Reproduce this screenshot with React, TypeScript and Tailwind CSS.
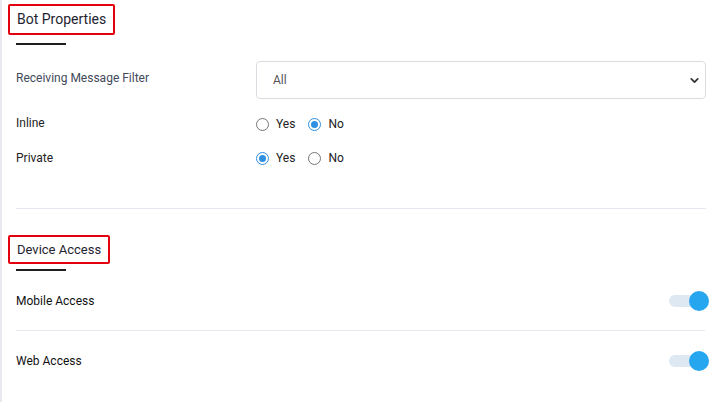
import { ChevronDown } from "lucide-react";

function Radio({ checked, label }: { checked: boolean; label: string }) {
  return (
    <label className="flex items-center gap-[7px]">
      {checked ? (
        <span className="w-[13px] h-[13px] rounded-full border border-[#2f8fe0] flex items-center justify-center">
          <span className="w-[7px] h-[7px] rounded-full bg-[#2f8fe0]" />
        </span>
      ) : (
        <span className="w-[13px] h-[13px] rounded-full border border-[#767676]" />
      )}
      <span className="text-[12px] text-[#222]">{label}</span>
    </label>
  );
}

function Toggle() {
  return (
    <div className="relative w-[40px] h-[20px] flex items-center">
      <div className="w-[30px] h-[12px] rounded-full bg-[#dde8f3]" />
      <div className="absolute right-0 top-0 w-[20px] h-[20px] rounded-full bg-[#27a6f0]" />
    </div>
  );
}

export default function App() {
  return (
    <div
      className="min-h-[402px] bg-white border-l-2 border-[#e8e8ee] pl-[6px] pr-[9px] pt-[4px]"
      style={{ fontFamily: "Roboto, 'Liberation Sans', sans-serif" }}
    >
      {/* Bot properties */}
      <div className="inline-block border-2 border-[#e3000f] rounded-[2px] px-[7px] h-[31px] leading-[27px] text-[14px] text-[#1f2430]">
        Bot Properties
      </div>
      <div className="ml-[8px] mt-[8px] w-[50px] h-[2px] bg-[#1f1f1f]" />

      <div className="ml-[8px] mr-[3px] mt-[16px] flex items-center h-[38px]">
        <div className="w-[240px] text-[12px] text-[#3f4a5a] -mt-[4px]">Receiving Message Filter</div>
        <div className="flex-1 h-[38px] border border-[#d9dce0] rounded-[4px] flex items-center justify-between pl-[16px] pr-[4px]">
          <span className="text-[12px] text-[#555]">All</span>
          <ChevronDown size={13} strokeWidth={3.2} className="text-[#333]" />
        </div>
      </div>

      <div className="ml-[8px] mt-[15px] flex items-center h-[20px]">
        <div className="w-[240px] text-[12px] text-[#222] -mt-[2px]">Inline</div>
        <div className="flex items-center gap-[13px]">
          <Radio checked={false} label="Yes" />
          <Radio checked label="No" />
        </div>
      </div>

      <div className="ml-[8px] mt-[14px] flex items-center h-[20px]">
        <div className="w-[240px] text-[12px] text-[#222]">Private</div>
        <div className="flex items-center gap-[13px]">
          <Radio checked label="Yes" />
          <Radio checked={false} label="No" />
        </div>
      </div>

      <div className="ml-[8px] mr-[3px] mt-[40px] h-px bg-[#e6e8f0]" />

      {/* Device access */}
      <div className="mt-[26px] inline-block border-2 border-[#e3000f] rounded-[2px] px-[7px] h-[29px] leading-[25px] text-[13px] text-[#1f2430]">
        Device Access
      </div>
      <div className="ml-[8px] mt-[5px] w-[50px] h-[2px] bg-[#1f1f1f]" />

      <div className="ml-[8px] mt-[19px] flex items-center justify-between h-[22px]">
        <div className="text-[12px] text-[#111]">Mobile Access</div>
        <Toggle />
      </div>
      <div className="ml-[8px] mr-[4px] mt-[18px] h-px bg-[#e6e8f0]" />
      <div className="ml-[8px] mt-[19px] flex items-center justify-between h-[22px]">
        <div className="text-[12px] text-[#111]">Web Access</div>
        <Toggle />
      </div>
    </div>
  );
}
